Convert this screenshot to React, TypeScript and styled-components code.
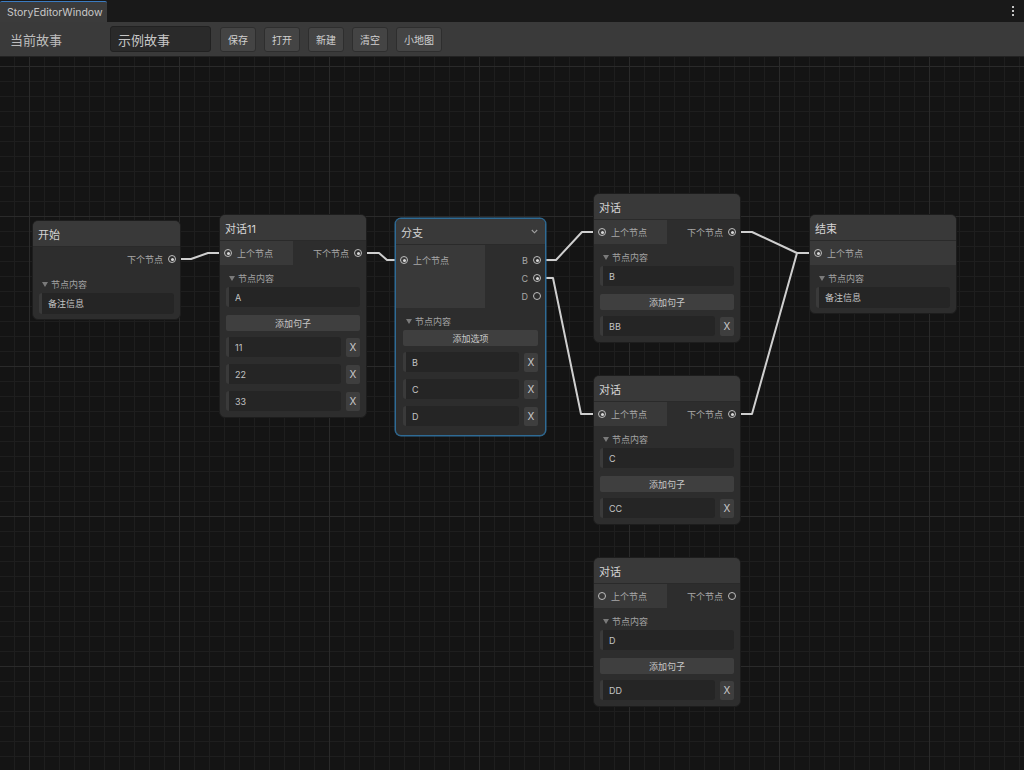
import React from 'react';
import styled, { createGlobalStyle, css } from 'styled-components';

const GlobalStyle = createGlobalStyle`
  html, body { margin: 0; padding: 0; background: #151515; }
  body { font-family: Inter, "Noto Sans CJK SC", sans-serif; overflow: hidden; }
  * { box-sizing: border-box; }
`;

const Window = styled.div`
  width: 1024px;
  height: 770px;
  display: flex;
  flex-direction: column;
  background: #151515;
  overflow: hidden;
`;

const TabBar = styled.div`
  height: 22px;
  flex: none;
  background: #191919;
  display: flex;
  align-items: flex-end;
  justify-content: space-between;
  padding-right: 9px;
`;

const Tab = styled.div`
  width: 107px;
  height: 21px;
  padding-left: 7px;
  background: #3b3b3b;
  border-top: 1px solid #3b7bc0;
  border-radius: 2px 2px 0 0;
  color: #c8c8c8;
  font-size: 10.5px;
  display: flex;
  align-items: center;
  white-space: nowrap;
`;

const Kebab = styled.svg`
  align-self: center;
  width: 4px;
  height: 12px;
`;

const Toolbar = styled.div`
  height: 35px;
  flex: none;
  background: #3a3a3a;
  border-bottom: 1px solid #222;
  display: flex;
  align-items: center;
  padding-left: 10px;
`;

const ToolLabel = styled.div`
  width: 100px;
  font-size: 13px;
  color: #bdbdbd;
`;

const StoryInput = styled.div`
  width: 101px;
  height: 26px;
  background: #2a2a2a;
  border: 1px solid #212121;
  border-radius: 3px;
  padding-left: 7px;
  display: flex;
  align-items: center;
  font-size: 13px;
  color: #c6c6c6;
  margin-right: 9px;
`;

const ToolButtons = styled.div`
  display: flex;
  gap: 8px;
`;

const ToolButton = styled.div`
  height: 25px;
  padding: 0 7px;
  background: #444;
  border: 1px solid #2e2e2e;
  border-radius: 3px;
  display: flex;
  align-items: center;
  font-size: 10px;
  color: #d0d0d0;
`;

const Canvas = styled.div`
  flex: 1;
  position: relative;
  background-color: #141414;
  background-image:
    linear-gradient(to right, #2a2a2a 1px, transparent 1px),
    linear-gradient(to bottom, #2a2a2a 1px, transparent 1px),
    linear-gradient(to right, #1e1e1e 1px, transparent 1px),
    linear-gradient(to bottom, #1e1e1e 1px, transparent 1px);
  background-size: 150px 150px, 150px 150px, 15px 15px, 15px 15px;
  background-position: 29px 9px, 29px 9px, 14px 9px, 14px 9px;
`;

const Edges = styled.svg`
  position: absolute;
  left: 0;
  top: 0;
  width: 1024px;
  height: 713px;
`;

const NodeBox = styled.div<{ $x: number; $y: number; $w: number; $selected?: boolean }>`
  position: absolute;
  left: ${(p) => p.$x}px;
  top: ${(p) => p.$y}px;
  width: ${(p) => p.$w}px;
  background: #2d2d2d;
  border: 1px solid ${(p) => (p.$selected ? '#2f6b95' : '#1d1d1d')};
  border-radius: 6px;
  overflow: hidden;
  ${(p) =>
    p.$selected &&
    css`
      box-shadow: 0 0 0 0.5px #2f6b95;
    `}
`;

const Header = styled.div`
  height: 26px;
  background: #393939;
  border-bottom: 1px solid #2a2a2a;
  padding: 0 7px 0 5px;
  display: flex;
  align-items: center;
  justify-content: space-between;
  font-size: 11px;
  color: #d4d4d4;
`;

const Chevron = styled.svg`
  width: 7px;
  height: 5px;
`;

const PortRow = styled.div`
  display: flex;
`;

const InSide = styled.div<{ $tall?: boolean }>`
  flex: 1 1 auto;
  background: #393939;
  padding: ${(p) => (p.$tall ? '6px 4px 3px' : '3px 4px')};
  display: flex;
  flex-direction: column;
  align-items: flex-start;
`;

const OutSide = styled.div<{ $tall?: boolean }>`
  flex: 1 1 auto;
  padding: ${(p) => (p.$tall ? '6px 4px 3px' : '3px 4px')};
  display: flex;
  flex-direction: column;
  align-items: flex-end;
`;

const PortItem = styled.div`
  height: 18px;
  display: flex;
  align-items: center;
  gap: 5px;
`;

const PortLabel = styled.span`
  font-size: 9px;
  color: #a8a8a8;
  white-space: nowrap;
`;

const Dot = styled.span<{ $on: boolean }>`
  flex: none;
  position: relative;
  width: 8px;
  height: 8px;
  border-radius: 50%;
  border: 1.3px solid #bdbdbd;
  ${(p) =>
    p.$on &&
    css`
      &::after {
        content: '';
        position: absolute;
        left: 50%;
        top: 50%;
        width: 3px;
        height: 3px;
        margin: -1.5px 0 0 -1.5px;
        border-radius: 50%;
        background: #d8d8d8;
      }
    `}
`;

const Content = styled.div<{ $px: number; $pb: number }>`
  display: flex;
  flex-direction: column;
  padding: 0 ${(p) => p.$px}px ${(p) => p.$pb}px;
`;

const SectionLabel = styled.div`
  margin-top: 6px;
  height: 14px;
  padding-left: 3px;
  display: flex;
  align-items: center;
  gap: 3px;
  font-size: 9px;
  color: #a2a2a2;
`;

const Triangle = styled.span`
  width: 0;
  height: 0;
  border-left: 3px solid transparent;
  border-right: 3px solid transparent;
  border-top: 5px solid #7a7a7a;
`;

const Field = styled.div<{ $h: number; $mt?: number }>`
  flex: none;
  height: ${(p) => p.$h}px;
  margin-top: ${(p) => p.$mt ?? 0}px;
  background: #252525;
  border-left: 3px solid #3a3a3a;
  border-radius: 3px;
  padding-left: 6px;
  display: flex;
  align-items: center;
  font-size: 9px;
  color: #c4c4c4;
`;

const RowField = styled(Field)`
  flex: 1 1 0;
  min-width: 0;
`;

const AddButton = styled.div<{ $mt: number }>`
  height: 16px;
  flex: none;
  margin-top: ${(p) => p.$mt}px;
  background: #3f3f3f;
  border-radius: 2px;
  display: flex;
  align-items: center;
  justify-content: center;
  font-size: 9px;
  color: #c8c8c8;
`;

const Rows = styled.div`
  margin-top: 6px;
  display: flex;
  flex-direction: column;
  gap: 7px;
`;

const Row = styled.div`
  display: flex;
  align-items: center;
  gap: 5px;
`;

const XButton = styled.div`
  width: 14px;
  height: 19px;
  flex: none;
  background: #3e3e3e;
  border-radius: 2px;
  display: flex;
  align-items: center;
  justify-content: center;
  font-size: 10px;
  color: #cacaca;
`;

type Port = { label: string; on: boolean };
type Body =
  | { kind: 'note'; text: string }
  | { kind: 'dialog'; field: string; rows: string[] }
  | { kind: 'branch'; rows: string[] };

type NodeSpec = {
  title: string;
  x: number;
  y: number;
  w: number;
  selected?: boolean;
  chevron?: boolean;
  inputs?: Port[];
  outputs?: Port[];
  tall?: boolean;
  body: Body;
};

const nodes: NodeSpec[] = [
  {
    title: '开始',
    x: 32,
    y: 163,
    w: 149,
    outputs: [{ label: '下个节点', on: true }],
    body: { kind: 'note', text: '备注信息' },
  },
  {
    title: '对话11',
    x: 219,
    y: 157,
    w: 148,
    inputs: [{ label: '上个节点', on: true }],
    outputs: [{ label: '下个节点', on: true }],
    body: { kind: 'dialog', field: 'A', rows: ['11', '22', '33'] },
  },
  {
    title: '分支',
    x: 395,
    y: 161,
    w: 151,
    selected: true,
    chevron: true,
    tall: true,
    inputs: [{ label: '上个节点', on: true }],
    outputs: [
      { label: 'B', on: true },
      { label: 'C', on: true },
      { label: 'D', on: false },
    ],
    body: { kind: 'branch', rows: ['B', 'C', 'D'] },
  },
  {
    title: '对话',
    x: 593,
    y: 136,
    w: 148,
    inputs: [{ label: '上个节点', on: true }],
    outputs: [{ label: '下个节点', on: true }],
    body: { kind: 'dialog', field: 'B', rows: ['BB'] },
  },
  {
    title: '对话',
    x: 593,
    y: 318,
    w: 148,
    inputs: [{ label: '上个节点', on: true }],
    outputs: [{ label: '下个节点', on: true }],
    body: { kind: 'dialog', field: 'C', rows: ['CC'] },
  },
  {
    title: '对话',
    x: 593,
    y: 500,
    w: 148,
    inputs: [{ label: '上个节点', on: false }],
    outputs: [{ label: '下个节点', on: false }],
    body: { kind: 'dialog', field: 'D', rows: ['DD'] },
  },
  {
    title: '结束',
    x: 809,
    y: 157,
    w: 148,
    inputs: [{ label: '上个节点', on: true }],
    body: { kind: 'note', text: '备注信息' },
  },
];

const edges = [
  'M172 202 H191 L208 196 H228',
  'M358 196 H379 L387 203 H404',
  'M537 203 H556 L582 175 H602',
  'M537 221 H553 L581 357 H602',
  'M732 175 H752 L797 196 H818',
  'M732 357 H752 L797 196 H818',
];

function NodeBody({ body }: { body: Body }) {
  if (body.kind === 'note') {
    return (
      <Content $px={6} $pb={5}>
        <SectionLabel>
          <Triangle />
          节点内容
        </SectionLabel>
        <Field $h={21} $mt={2}>
          {body.text}
        </Field>
      </Content>
    );
  }
  if (body.kind === 'dialog') {
    return (
      <Content $px={6} $pb={6}>
        <SectionLabel>
          <Triangle />
          节点内容
        </SectionLabel>
        <Field $h={20} $mt={2}>
          {body.field}
        </Field>
        <AddButton $mt={8}>添加句子</AddButton>
        <Rows>
          {body.rows.map((r) => (
            <Row key={r}>
              <RowField $h={20}>{r}</RowField>
              <XButton>X</XButton>
            </Row>
          ))}
        </Rows>
      </Content>
    );
  }
  return (
    <Content $px={7} $pb={9}>
      <SectionLabel>
        <Triangle />
        节点内容
      </SectionLabel>
      <AddButton $mt={2}>添加选项</AddButton>
      <Rows>
        {body.rows.map((r) => (
          <Row key={r}>
            <RowField $h={20}>{r}</RowField>
            <XButton>X</XButton>
          </Row>
        ))}
      </Rows>
    </Content>
  );
}

function GraphNode({ n }: { n: NodeSpec }) {
  return (
    <NodeBox $x={n.x} $y={n.y} $w={n.w} $selected={n.selected}>
      <Header>
        <span>{n.title}</span>
        {n.chevron && (
          <Chevron viewBox="0 0 7 5">
            <path d="M0.8 1 L3.5 3.8 L6.2 1" fill="none" stroke="#a0a0a0" strokeWidth="1.1" />
          </Chevron>
        )}
      </Header>
      <PortRow>
        {n.inputs && (
          <InSide $tall={n.tall}>
            {n.inputs.map((p) => (
              <PortItem key={p.label}>
                <Dot $on={p.on} />
                <PortLabel>{p.label}</PortLabel>
              </PortItem>
            ))}
          </InSide>
        )}
        {n.outputs && (
          <OutSide $tall={n.tall}>
            {n.outputs.map((p) => (
              <PortItem key={p.label}>
                <PortLabel>{p.label}</PortLabel>
                <Dot $on={p.on} />
              </PortItem>
            ))}
          </OutSide>
        )}
      </PortRow>
      <NodeBody body={n.body} />
    </NodeBox>
  );
}

export default function App() {
  return (
    <>
      <GlobalStyle />
      <Window>
        <TabBar>
          <Tab>StoryEditorWindow</Tab>
          <Kebab viewBox="0 0 4 12">
            <rect x="1" y="1" width="2" height="2" fill="#c4c4c4" />
            <rect x="1" y="5" width="2" height="2" fill="#c4c4c4" />
            <rect x="1" y="9" width="2" height="2" fill="#c4c4c4" />
          </Kebab>
        </TabBar>
        <Toolbar>
          <ToolLabel>当前故事</ToolLabel>
          <StoryInput>示例故事</StoryInput>
          <ToolButtons>
            <ToolButton>保存</ToolButton>
            <ToolButton>打开</ToolButton>
            <ToolButton>新建</ToolButton>
            <ToolButton>清空</ToolButton>
            <ToolButton>小地图</ToolButton>
          </ToolButtons>
        </Toolbar>
        <Canvas>
          <Edges viewBox="0 0 1024 713">
            {edges.map((d) => (
              <path
                key={d}
                d={d}
                fill="none"
                stroke="#cfcfcf"
                strokeWidth="2"
                strokeLinejoin="round"
                strokeLinecap="round"
              />
            ))}
          </Edges>
          {nodes.map((n, i) => (
            <GraphNode key={i} n={n} />
          ))}
        </Canvas>
      </Window>
    </>
  );
}
